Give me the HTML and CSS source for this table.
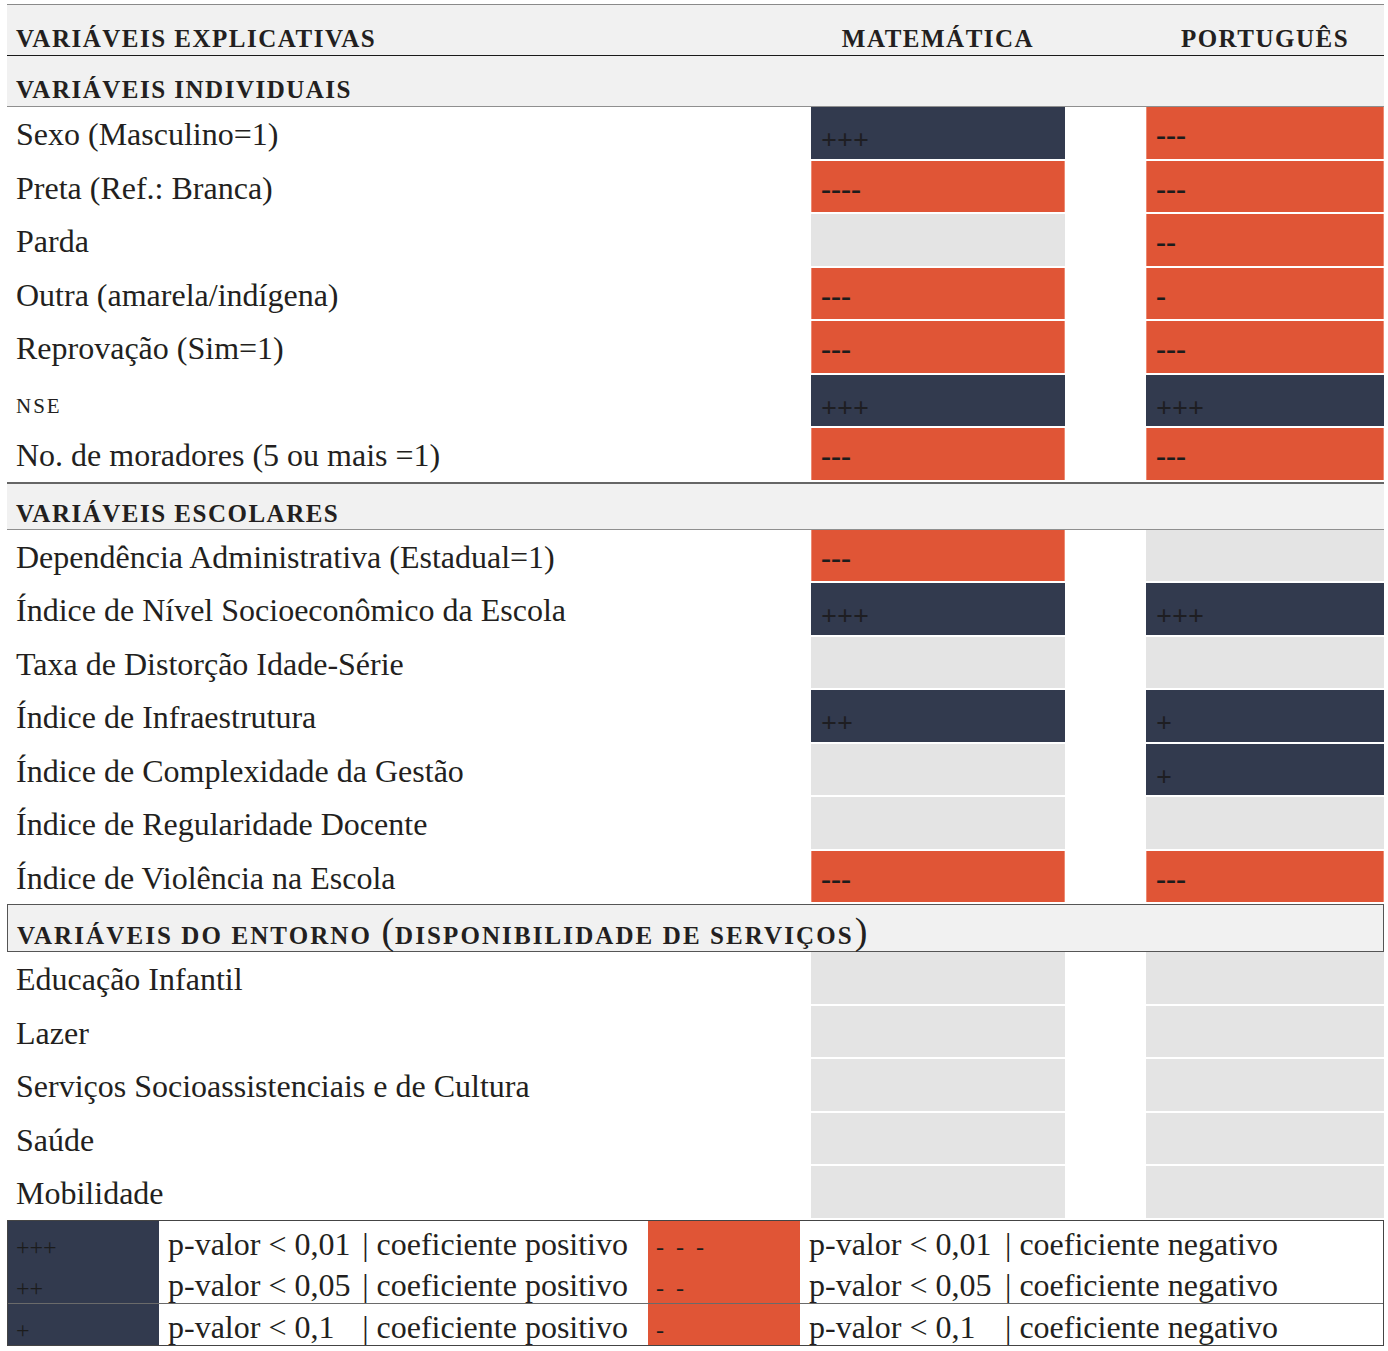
FILE: index.html
```html
<!DOCTYPE html>
<html lang="pt-BR">
<head>
<meta charset="utf-8">
<title>Variáveis explicativas</title>
<link rel="stylesheet" href="styles.css">
</head>
<body>
<div class="table">
  <div class="head-row">
    <div class="label sc">VARIÁVEIS EXPLICATIVAS</div>
    <div class="col-head mat">MATEMÁTICA</div>
    <div class="gap"></div>
    <div class="col-head por">PORTUGUÊS</div>
  </div>

  <div class="section sec-ind"><span class="sc">VARIÁVEIS INDIVIDUAIS</span></div>
  <div class="row"><div class="label">Sexo (Masculino=1)</div><div class="cell pos">+++</div><div class="gap"></div><div class="cell neg">---</div></div>
  <div class="row"><div class="label">Preta (Ref.: Branca)</div><div class="cell neg">----</div><div class="gap"></div><div class="cell neg">---</div></div>
  <div class="row"><div class="label">Parda</div><div class="cell nil"></div><div class="gap"></div><div class="cell neg">--</div></div>
  <div class="row"><div class="label">Outra (amarela/indígena)</div><div class="cell neg">---</div><div class="gap"></div><div class="cell neg">-</div></div>
  <div class="row"><div class="label">Reprovação (Sim=1)</div><div class="cell neg">---</div><div class="gap"></div><div class="cell neg">---</div></div>
  <div class="row"><div class="label small">NSE</div><div class="cell pos">+++</div><div class="gap"></div><div class="cell pos">+++</div></div>
  <div class="row"><div class="label">No. de moradores (5 ou mais =1)</div><div class="cell neg">---</div><div class="gap"></div><div class="cell neg">---</div></div>

  <div class="section sec-esc"><span class="sc">VARIÁVEIS ESCOLARES</span></div>
  <div class="row"><div class="label">Dependência Administrativa (Estadual=1)</div><div class="cell neg">---</div><div class="gap"></div><div class="cell nil"></div></div>
  <div class="row"><div class="label">Índice de Nível Socioeconômico da Escola</div><div class="cell pos">+++</div><div class="gap"></div><div class="cell pos">+++</div></div>
  <div class="row"><div class="label">Taxa de Distorção Idade-Série</div><div class="cell nil"></div><div class="gap"></div><div class="cell nil"></div></div>
  <div class="row"><div class="label">Índice de Infraestrutura</div><div class="cell pos">++</div><div class="gap"></div><div class="cell pos">+</div></div>
  <div class="row"><div class="label">Índice de Complexidade da Gestão</div><div class="cell nil"></div><div class="gap"></div><div class="cell pos">+</div></div>
  <div class="row"><div class="label">Índice de Regularidade Docente</div><div class="cell nil"></div><div class="gap"></div><div class="cell nil"></div></div>
  <div class="row"><div class="label">Índice de Violência na Escola</div><div class="cell neg">---</div><div class="gap"></div><div class="cell neg">---</div></div>

  <div class="section sec-ent"><span class="sc">VARIÁVEIS DO ENTORNO <span class="paren">(</span>DISPONIBILIDADE DE SERVIÇOS<span class="paren">)</span></span></div>
  <div class="row"><div class="label">Educação Infantil</div><div class="cell nil"></div><div class="gap"></div><div class="cell nil"></div></div>
  <div class="row"><div class="label">Lazer</div><div class="cell nil"></div><div class="gap"></div><div class="cell nil"></div></div>
  <div class="row"><div class="label">Serviços Socioassistenciais e de Cultura</div><div class="cell nil"></div><div class="gap"></div><div class="cell nil"></div></div>
  <div class="row"><div class="label">Saúde</div><div class="cell nil"></div><div class="gap"></div><div class="cell nil"></div></div>
  <div class="row"><div class="label">Mobilidade</div><div class="cell nil"></div><div class="gap"></div><div class="cell nil"></div></div>

  <div class="legend">
    <div class="lg-row">
      <div class="lg-sym pos">+++</div>
      <div class="lg-text"><span class="pv">p-valor &lt; 0,01</span><span class="co">| coeficiente positivo</span></div>
      <div class="lg-sym neg">- - -</div>
      <div class="lg-text"><span class="pv">p-valor &lt; 0,01</span><span class="co">| coeficiente negativo</span></div>
    </div>
    <div class="lg-row">
      <div class="lg-sym pos">++</div>
      <div class="lg-text"><span class="pv">p-valor &lt; 0,05</span><span class="co">| coeficiente positivo</span></div>
      <div class="lg-sym neg">- -</div>
      <div class="lg-text"><span class="pv">p-valor &lt; 0,05</span><span class="co">| coeficiente negativo</span></div>
    </div>
    <div class="lg-row last">
      <div class="lg-sym pos">+</div>
      <div class="lg-text"><span class="pv">p-valor &lt; 0,1</span><span class="co">| coeficiente positivo</span></div>
      <div class="lg-sym neg">-</div>
      <div class="lg-text"><span class="pv">p-valor &lt; 0,1</span><span class="co">| coeficiente negativo</span></div>
    </div>
  </div>
</div>
</body>
</html>
```

FILE: styles.css
```css
html, body {
  margin: 0;
  padding: 0;
  background: #ffffff;
}

body {
  font-family: "Liberation Serif", "Times New Roman", serif;
  color: #231f20;
}

.table {
  width: 1377px;
  margin: 4px 0 0 7px;
}

.sc {
  font-weight: bold;
  font-size: 25px;
  line-height: 25px;
  letter-spacing: 1.5px;
  white-space: nowrap;
}

.head-row {
  display: flex;
  height: 52px;
  background: #f1f1f1;
  border-top: 1.5px solid #8a8a8a;
  border-bottom: 1.5px solid #1a1a1a;
  box-sizing: border-box;
  align-items: flex-end;
}

.head-row .label {
  width: 804px;
  flex: none;
  padding-left: 9px;
  padding-bottom: 4px;
  box-sizing: border-box;
}

.col-head {
  flex: none;
  font-weight: bold;
  font-size: 25px;
  line-height: 25px;
  letter-spacing: 1.5px;
  text-align: center;
  padding-bottom: 4px;
}

.col-head.mat { width: 254px; }
.col-head.por { width: 238px; }

.gap { width: 81px; flex: none; }

.section {
  background: #f1f1f1;
  box-sizing: border-box;
  padding-left: 9px;
  display: flex;
  align-items: flex-end;
}

.sec-ind {
  height: 51px;
  border-bottom: 1.5px solid #8f8f8f;
  padding-bottom: 4px;
}

.sec-esc {
  height: 48px;
  border-top: 2px solid #666666;
  border-bottom: 1.5px solid #8f8f8f;
  padding-bottom: 2.5px;
}

.sec-ent {
  height: 48px;
  border: 1.5px solid #555555;
  padding-bottom: 3.5px;
}

.sec-ent .sc {
  letter-spacing: 2.1px;
}

.paren {
  font-size: 38px;
  line-height: 25px;
  font-weight: normal;
  letter-spacing: 0;
  margin: 0 1px;
}

.row {
  display: flex;
  height: 53.5px;
}

.row .label {
  width: 804px;
  flex: none;
  box-sizing: border-box;
  padding-left: 9px;
  font-size: 32px;
  line-height: 1;
  padding-top: 11px;
  white-space: nowrap;
}

.row .label.small {
  font-size: 21px;
  letter-spacing: 2px;
  padding-top: 21px;
}

.cell {
  flex: none;
  box-sizing: border-box;
  height: 51.5px;
  padding-left: 10px;
  font-size: 28px;
  line-height: 1;
  color: #1c1c1c;
}

.row .cell:nth-child(2) { width: 254px; }
.row .cell:nth-child(4) { width: 238px; }

.cell.pos {
  background: #323a4e;
  padding-top: 19px;
  font-weight: bold;
  color: #1e1e22;
}

.cell.neg {
  background: #e05536;
  padding-top: 13px;
  font-weight: bold;
  font-size: 30px;
  border-left: 1px solid #ec8a73;
  border-right: 1px solid #ec8a73;
  padding-left: 9px;
}

.cell.nil { background: #e4e4e4; }

.legend {
  border: 1.5px solid #444444;
  box-sizing: border-box;
  height: 126px;
}

.lg-row {
  display: flex;
  height: 41px;
}

.lg-row:nth-child(2) {
  border-bottom: 1.5px solid #6a6a6a;
}

.lg-sym {
  flex: none;
  box-sizing: border-box;
  padding-left: 8px;
  padding-top: 14px;
  font-size: 24px;
  line-height: 1;
  color: #1c1c1c;
}

.lg-sym.pos {
  width: 151px;
  background: #323a4e;
}

.lg-sym.neg {
  width: 152px;
  margin-left: 20px;
  padding-left: 8px;
  letter-spacing: 3px;
  background: #e05536;
}

.lg-text {
  flex: none;
  box-sizing: border-box;
  padding-left: 9px;
  padding-top: 7px;
  font-size: 32px;
  line-height: 1;
  white-space: nowrap;
  display: flex;
}

.lg-text .pv {
  display: inline-block;
  width: 196px;
}

.lg-row .lg-text:nth-child(2) { width: 469px; }
```
